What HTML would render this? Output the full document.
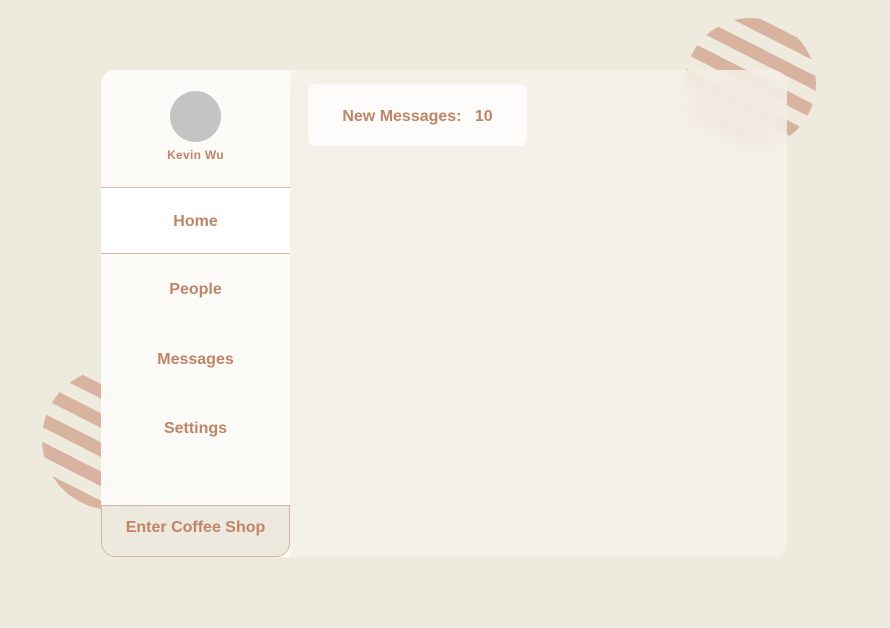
<!DOCTYPE html>
<html><head><meta charset="utf-8"><style>
*{margin:0;padding:0;box-sizing:border-box}
body{width:890px;height:628px;background:#eeeade;position:relative;overflow:hidden;font-family:"Liberation Sans",sans-serif;font-weight:bold;color:#c08468}
.circ{position:absolute;border-radius:50%;background:repeating-linear-gradient(207deg,#d8b4a0 0 13px,#eeeade 13px 26px)}
.card{position:absolute;left:101px;top:70px;width:686px;height:487px;border-radius:14px;background:rgba(247,244,237,0.72);backdrop-filter:blur(9px);-webkit-backdrop-filter:blur(9px);overflow:hidden}
.side{position:absolute;left:0;top:0;width:189px;height:487px;background:rgba(253,252,250,0.82);border-radius:14px 0 0 14px}
.av{position:absolute;left:69px;top:21px;width:51px;height:51px;border-radius:50%;background:#c4c4c4}
.name{position:absolute;left:0;width:189px;top:78px;text-align:center;font-size:12px;font-weight:bold;letter-spacing:.3px}
.home{position:absolute;left:0;top:117px;width:189px;height:67px;background:#fff;border-top:1.5px solid #dcb8a8;border-bottom:1.5px solid #dcb8a8}
.nav{position:absolute;left:0;width:189px;text-align:center;font-size:16px}
.btn{position:absolute;left:0;top:435px;width:189px;height:52px;background:#eee9de;border:1.5px solid #d8b4a0;border-radius:0 0 14px 14px;text-align:center;line-height:44px;font-size:16px}
.msg{position:absolute;left:207px;top:14px;width:219px;height:62px;background:#fdfcfa;border-radius:8px;font-size:16px;line-height:66px;text-align:center}
</style></head><body>
<div class="circ" style="left:685px;top:18px;width:131px;height:131px"></div>
<div class="circ" style="left:42px;top:368px;width:142px;height:142px"></div>
<div class="card">
<div class="side">
<div class="av"></div>
<div class="name">Kevin Wu</div>
<div class="home"></div>
<div class="nav" style="top:143px">Home</div>
<div class="nav" style="top:211px">People</div>
<div class="nav" style="top:281px">Messages</div>
<div class="nav" style="top:350px">Settings</div>
<div class="btn">Enter Coffee Shop</div>
</div>
<div class="msg">New Messages:&nbsp;&nbsp;&nbsp;10</div>
</div>
</body></html>
